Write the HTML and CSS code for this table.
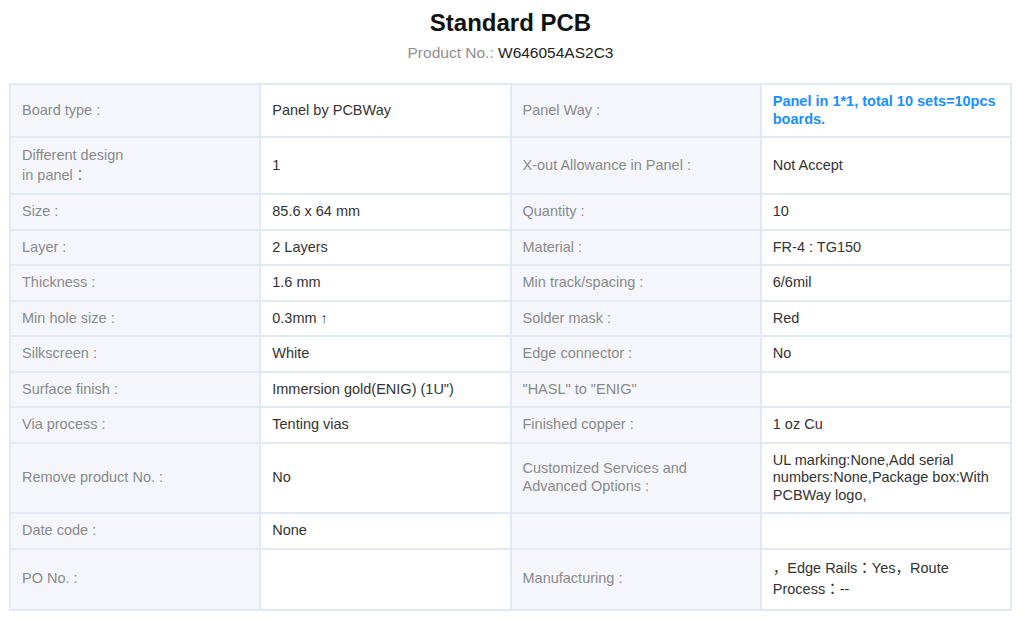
FILE: index.html
```html
<!DOCTYPE html>
<html lang="en">
<head>
<meta charset="utf-8">
<title>Standard PCB</title>
<link rel="stylesheet" href="styles.css">
</head>
<body>
<div class="page">
  <header class="header">
    <h1 class="title">Standard PCB</h1>
    <p class="product">Product No.: <span class="product-no">W646054AS2C3</span></p>
  </header>
  <table class="spec">
    <colgroup><col class="c"><col class="c"><col class="c"><col class="c"></colgroup>
    <tbody>
      <tr>
        <td class="label">Board type :</td>
        <td class="value">Panel by PCBWay</td>
        <td class="label">Panel Way :</td>
        <td class="value highlight">Panel in 1*1, total 10 sets=10pcs<br>boards.</td>
      </tr>
      <tr>
        <td class="label cjk20">Different design<br>in panel：</td>
        <td class="value">1</td>
        <td class="label">X-out Allowance in Panel :</td>
        <td class="value">Not Accept</td>
      </tr>
      <tr>
        <td class="label">Size :</td>
        <td class="value">85.6 x 64 mm</td>
        <td class="label">Quantity :</td>
        <td class="value">10</td>
      </tr>
      <tr>
        <td class="label">Layer :</td>
        <td class="value">2 Layers</td>
        <td class="label">Material :</td>
        <td class="value">FR-4 : TG150</td>
      </tr>
      <tr>
        <td class="label">Thickness :</td>
        <td class="value">1.6 mm</td>
        <td class="label">Min track/spacing :</td>
        <td class="value">6/6mil</td>
      </tr>
      <tr>
        <td class="label">Min hole size :</td>
        <td class="value">0.3mm ↑</td>
        <td class="label">Solder mask :</td>
        <td class="value">Red</td>
      </tr>
      <tr>
        <td class="label">Silkscreen :</td>
        <td class="value">White</td>
        <td class="label">Edge connector :</td>
        <td class="value">No</td>
      </tr>
      <tr>
        <td class="label">Surface finish :</td>
        <td class="value">Immersion gold(ENIG) (1U")</td>
        <td class="label">"HASL" to "ENIG"</td>
        <td class="value"></td>
      </tr>
      <tr>
        <td class="label">Via process :</td>
        <td class="value">Tenting vias</td>
        <td class="label">Finished copper :</td>
        <td class="value">1 oz Cu</td>
      </tr>
      <tr>
        <td class="label">Remove product No. :</td>
        <td class="value">No</td>
        <td class="label">Customized Services and<br>Advanced Options :</td>
        <td class="value">UL marking:None,Add serial<br>numbers:None,Package box:With<br>PCBWay logo,</td>
      </tr>
      <tr>
        <td class="label">Date code :</td>
        <td class="value">None</td>
        <td class="label"></td>
        <td class="value"></td>
      </tr>
      <tr>
        <td class="label">PO No. :</td>
        <td class="value"></td>
        <td class="label">Manufacturing :</td>
        <td class="value cjk22">，Edge Rails：Yes，Route<br>Process：--</td>
      </tr>
    </tbody>
  </table>
</div>
</body>
</html>
```
FILE: styles.css
```css
html, body {
  margin: 0;
  padding: 0;
  background: #ffffff;
}

body {
  font-family: "Liberation Sans", Arial, "Noto Sans CJK JP", sans-serif;
  color: #333333;
}

.page {
  width: 1003px;
  margin-left: 9px;
}

.header {
  text-align: center;
  padding-top: 8px;
}

.title {
  margin: 0;
  font-size: 24px;
  line-height: 30px;
  font-weight: bold;
  color: #111111;
}

.product {
  margin: 5px 0 0;
  font-size: 15.5px;
  line-height: 20px;
  color: #909090;
}

.product-no {
  color: #222222;
}

.spec {
  margin-top: 20px;
  width: 1003px;
  border-collapse: collapse;
  table-layout: fixed;
  border: 2px solid #e3e9f3;
}

.spec td {
  border: 2px solid #e3e9f3;
  padding: 8px 11px;
  font-size: 14.5px;
  line-height: 17.5px;
  vertical-align: middle;
}

.label {
  background: #f4f6fb;
  color: #8a8a8a;
}

.value {
  background: #ffffff;
  color: #333333;
}

.highlight {
  color: #1890ff;
  font-weight: bold;
}

.cjk20 {
  line-height: 19.5px !important;
}

.cjk22 {
  line-height: 21.5px !important;
}
```
